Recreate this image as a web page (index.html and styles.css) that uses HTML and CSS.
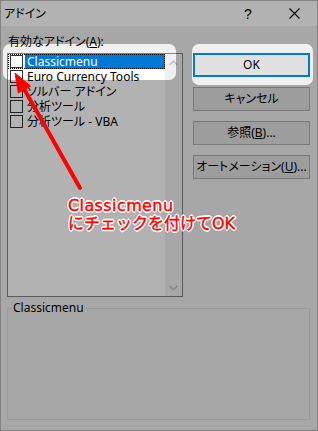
FILE: index.html
```html
<!DOCTYPE html>
<html lang="ja">
<head>
<meta charset="utf-8">
<title>アドイン</title>
<link rel="stylesheet" href="styles.css">
</head>
<body>
<div class="dialog">
  <div class="titlebar">
    <span class="title">アドイン</span>
    <span class="tb-btn help">?</span>
    <span class="tb-btn close">
      <svg width="11" height="11" viewBox="0 0 11 11"><path d="M0.5 0.5L10.5 10.5M10.5 0.5L0.5 10.5" stroke="#000" stroke-width="1.1" fill="none"/></svg>
    </span>
  </div>
  <div class="content">
    <div class="top">
      <div class="left">
        <div class="label">有効なアドイン(<u>A</u>):</div>
        <div class="list">
          <div class="items">
            <div class="item focused"><span class="cb"></span><span class="txt sel">Classicmenu</span></div>
            <div class="item"><span class="cb"></span><span class="txt">Euro Currency Tools</span></div>
            <div class="item"><span class="cb"></span><span class="txt">ソルバー アドイン</span></div>
            <div class="item"><span class="cb"></span><span class="txt">分析ツール</span></div>
            <div class="item"><span class="cb"></span><span class="txt">分析ツール - VBA</span></div>
          </div>
          <div class="scrollbar">
            <span class="sb-arrow"><svg width="9" height="6" viewBox="0 0 9 6"><path d="M0.7 5L4.5 1.2L8.3 5" stroke="#bdbdbd" stroke-width="1.4" fill="none"/></svg></span>
            <span class="sb-arrow"><svg width="9" height="6" viewBox="0 0 9 6"><path d="M0.7 1L4.5 4.8L8.3 1" stroke="#bdbdbd" stroke-width="1.4" fill="none"/></svg></span>
          </div>
        </div>
      </div>
      <div class="buttons">
        <button class="btn default">OK</button>
        <button class="btn">キャンセル</button>
        <button class="btn">参照(<u>B</u>)...</button>
        <button class="btn">オートメーション(<u>U</u>)...</button>
      </div>
    </div>
    <fieldset class="desc"><legend>Classicmenu</legend></fieldset>
  </div>

  <svg class="dim" width="318" height="431" viewBox="0 0 318 431">
    <defs>
      <mask id="holes">
        <rect x="0" y="0" width="318" height="431" fill="#fff"/>
        <rect x="3" y="44" width="173" height="36" rx="7" fill="#000"/>
        <rect x="192" y="44" width="121" height="41" rx="7" fill="#000"/>
      </mask>
    </defs>
    <rect x="0" y="0" width="318" height="431" fill="rgba(0,0,0,0.3)" mask="url(#holes)"/>
  </svg>

  <svg class="arrow" width="318" height="431" viewBox="0 0 318 431">
    <line x1="80" y1="188" x2="23" y2="87" stroke="#ff0000" stroke-width="4" stroke-linecap="round"/>
    <polygon points="15,73 30.5,86.1 18.3,92.9" fill="#ff0000" stroke="#ff0000" stroke-width="1" stroke-linejoin="round"/>
  </svg>

  <div class="note"><span class="l1">Classicmenu</span><br>にチェックを付けてOK</div>
</div>
</body>
</html>
```

FILE: styles.css
```css
* { box-sizing: border-box; }

html, body {
  margin: 0;
  padding: 0;
  background: #a8a8a8;
}

.dialog {
  position: relative;
  width: 318px;
  height: 431px;
  border: 1px solid #828282;
  background: #f0f0f0;
  font-family: "Noto Sans", "Noto Sans CJK JP", sans-serif;
  font-size: 12px;
  font-feature-settings: "palt";
  color: #000;
  display: flex;
  flex-direction: column;
  overflow: hidden;
}

.titlebar {
  height: 25px;
  background: #fff;
  display: flex;
  align-items: center;
  flex: none;
}

.title {
  flex: 1;
  padding-left: 3px;
  font-size: 12px;
  line-height: 16px;
}

.tb-btn {
  width: 46px;
  height: 25px;
  display: flex;
  align-items: center;
  justify-content: center;
}

.help {
  font-family: "Liberation Sans", sans-serif;
  font-size: 14px;
  padding-top: 1px;
}

.close svg { display: block; }

.content {
  flex: 1;
  padding: 8px 7px 10px 6px;
  display: flex;
  flex-direction: column;
}

.top {
  display: flex;
  gap: 10px;
}

.left {
  width: 176px;
  display: flex;
  flex-direction: column;
}

.label {
  height: 16px;
  line-height: 16px;
  padding-left: 1px;
}

.label u, .btn u { text-underline-offset: 1px; }

.list {
  margin-top: 3px;
  height: 244px;
  border: 1px solid #828282;
  background: #fff;
  display: flex;
}

.items {
  flex: 1;
  display: flex;
  flex-direction: column;
}

.item {
  height: 15px;
  display: flex;
  align-items: center;
  padding-left: 2px;
}

.item.focused {
  outline: 1px dotted #000;
  outline-offset: -1px;
}

.cb {
  width: 13px;
  height: 13px;
  border: 1px solid #333;
  background: #fff;
  flex: none;
}

.txt {
  height: 15px;
  line-height: 15px;
  padding-left: 2px;
  margin-left: 2px;
  white-space: nowrap;
}

.txt.sel {
  flex: 1;
  background: #0078d7;
  color: #fff;
}

.scrollbar {
  width: 17px;
  background: #f0f0f0;
  display: flex;
  flex-direction: column;
  justify-content: space-between;
}

.sb-arrow {
  height: 17px;
  display: flex;
  align-items: center;
  justify-content: center;
}

.sb-arrow svg { display: block; }

.buttons {
  width: 117px;
  padding-top: 19px;
  display: flex;
  flex-direction: column;
  gap: 10px;
}

.btn {
  height: 24px;
  margin: 0;
  padding: 0;
  border: 1px solid #adadad;
  background: #e1e1e1;
  font: inherit;
  color: #000;
  line-height: 20px;
}

.btn.default {
  border: 2px solid #0078d7;
}

.desc {
  margin: 3px 0 0 0;
  height: 120px;
  border: 1px solid #dcdcdc;
  padding: 0 0 0 4px;
  min-width: 0;
}

.desc legend {
  padding: 0 1px;
  line-height: 16px;
  font-size: 12px;
}

.dim, .arrow {
  position: absolute;
  left: -1px;
  top: -1px;
  pointer-events: none;
}

.note {
  position: absolute;
  left: 67px;
  top: 196px;
  font-family: "DejaVu Sans", "Noto Sans CJK JP", sans-serif;
  font-size: 16px;
  line-height: 18px;
  font-feature-settings: normal;
  color: #ff0000;
  -webkit-text-stroke: 0.4px #ff0000;
  white-space: nowrap;
  text-shadow:
    1.6px 0 0 #fff, -1.6px 0 0 #fff, 0 1.6px 0 #fff, 0 -1.6px 0 #fff,
    1.2px 1.2px 0 #fff, -1.2px 1.2px 0 #fff, 1.2px -1.2px 0 #fff, -1.2px -1.2px 0 #fff,
    0 0 3px rgba(0,0,0,0.35);
}

.note .l1 {
  letter-spacing: 0.4px;
}
```
